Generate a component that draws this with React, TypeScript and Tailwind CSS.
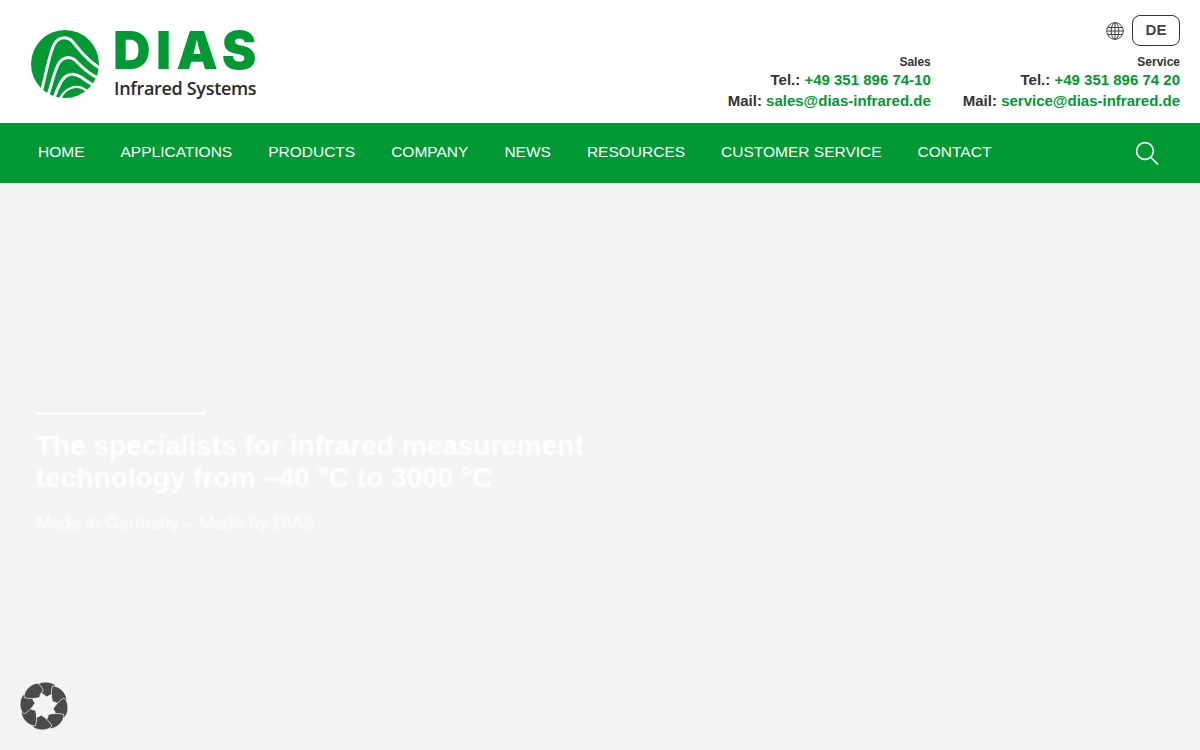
import React from 'react';

const navItems = ['Home', 'Applications', 'Products', 'Company', 'News', 'Resources', 'Customer Service', 'Contact'];

function LogoMark() {
  return (
    <svg width="68" height="68" viewBox="31 30 68 68" className="shrink-0">
      <circle cx="65" cy="64" r="34" fill="#009933" />
      <g fill="none" stroke="#fff" strokeWidth="3">
        <path d="M42 89 C46 74 50 50 55 43 C59 37 67 36 72 41 C79 49 87 61 100 68" />
        <path d="M48 95 C52 83 55 69 59 63 C63 57 70 56 75 60 C81 66 87 73 98 78" />
        <path d="M54 98 C57 90 60 81 65 77 C70 73 76 74 81 77 C85 80 88 82 93 85" />
        <path d="M60 99 C62 94 66 90 71 88 C76 86 82 87 87 91" strokeWidth="2.4" />
      </g>
    </svg>
  );
}

function CookieBadge() {
  return (
    <svg width="48" height="48" viewBox="-24 -24 48 48" className="absolute left-[20px] top-[682px]">
      {[0, 45, 90, 135, 180, 225, 270, 315].map(angle => (
        <path
          key={angle}
          transform={`rotate(${angle})`}
          d="M3 -9 C-2 -12 -6 -16 -8 -20 C-4 -25 6 -25 11 -21 C12.5 -19 12 -15 10 -11 C8 -12 5 -11 3 -9 Z"
          fill="#4a4a4a"
          stroke="#f3f3f3"
          strokeWidth="0.7"
        />
      ))}
    </svg>
  );
}

function ContactBlock({ label, tel, mail }: { label: string; tel: string; mail: string }) {
  return (
    <div className="text-right font-bold text-[#333]">
      <div className="text-[12px] leading-[14px]">{label}</div>
      <div className="text-[15px] leading-[21px]">
        Tel.: <span className="text-[#009933]">{tel}</span>
      </div>
      <div className="text-[15px] leading-[21px]">
        Mail: <span className="text-[#009933]">{mail}</span>
      </div>
    </div>
  );
}

export default function App() {
  return (
    <div className="relative h-[750px] overflow-hidden bg-[#f3f3f3] font-['Liberation_Sans',Arial,sans-serif]">
      {/* header */}
      <header className="h-[123px] bg-white flex justify-between pl-[31px] pr-5">
        <div className="flex items-start gap-[15px] pt-[30px]">
          <LogoMark />
          <div className="text-[#009933]">
            <div className="mt-[1px] -ml-[1px] font-['Inter',sans-serif] text-[52px] leading-[40px] font-black tracking-[5.4px]">DIAS</div>
            <div className="mt-[5px] font-['Open_Sans',sans-serif] text-[18px] leading-[24px] font-semibold tracking-[-0.32px] text-[#2b2b2b]">Infrared Systems</div>
          </div>
        </div>
        <div className="pt-[15px]">
          <div className="flex justify-end items-center gap-2">
            <svg width="18" height="18" viewBox="0 0 18 18" fill="none" stroke="#444" strokeWidth="1">
              <circle cx="9" cy="9" r="8.3" />
              <ellipse cx="9" cy="9" rx="3.8" ry="8.3" />
              <path d="M9 .7V17.3M1.6 5.5H16.4M1.6 12.5H16.4M.7 9H17.3" />
            </svg>
            <div className="w-[48px] h-[31px] border border-[#333] rounded-lg flex items-center justify-center text-[15px] font-bold text-[#444]">DE</div>
          </div>
          <div className="flex gap-8 mt-[9px]">
            <ContactBlock label="Sales" tel="+49 351 896 74-10" mail="sales@dias-infrared.de" />
            <ContactBlock label="Service" tel="+49 351 896 74 20" mail="service@dias-infrared.de" />
          </div>
        </div>
      </header>

      {/* nav */}
      <nav className="h-[60px] bg-[#009933] flex items-center justify-between pl-[38px] pr-[41px] text-white">
        <ul className="flex gap-9 pb-[2px] text-[15.5px] uppercase">
          {navItems.map(item => (
            <li key={item}>{item}</li>
          ))}
        </ul>
        <svg width="24" height="24" viewBox="0 0 24 24" fill="none" stroke="#fff" strokeWidth="1.6">
          <circle cx="10" cy="10" r="8.4" />
          <path d="M16 16.5L23 23.5" />
        </svg>
      </nav>

      {/* hero */}
      <section className="pl-9 pt-[229px] text-white">
        <div className="w-[169px] h-[3px] bg-white blur-[0.5px]" />
        <h1 className="mt-[15px] text-[28px] leading-[32px] font-bold blur-[1px]">
          The specialists for infrared measurement
          <br />
          technology from –40 °C to 3000 °C
        </h1>
        <p className="mt-[17px] text-[18px] leading-[24px] blur-[1px]">Made in Germany – Made by DIAS</p>
      </section>

      <CookieBadge />
    </div>
  );
}
